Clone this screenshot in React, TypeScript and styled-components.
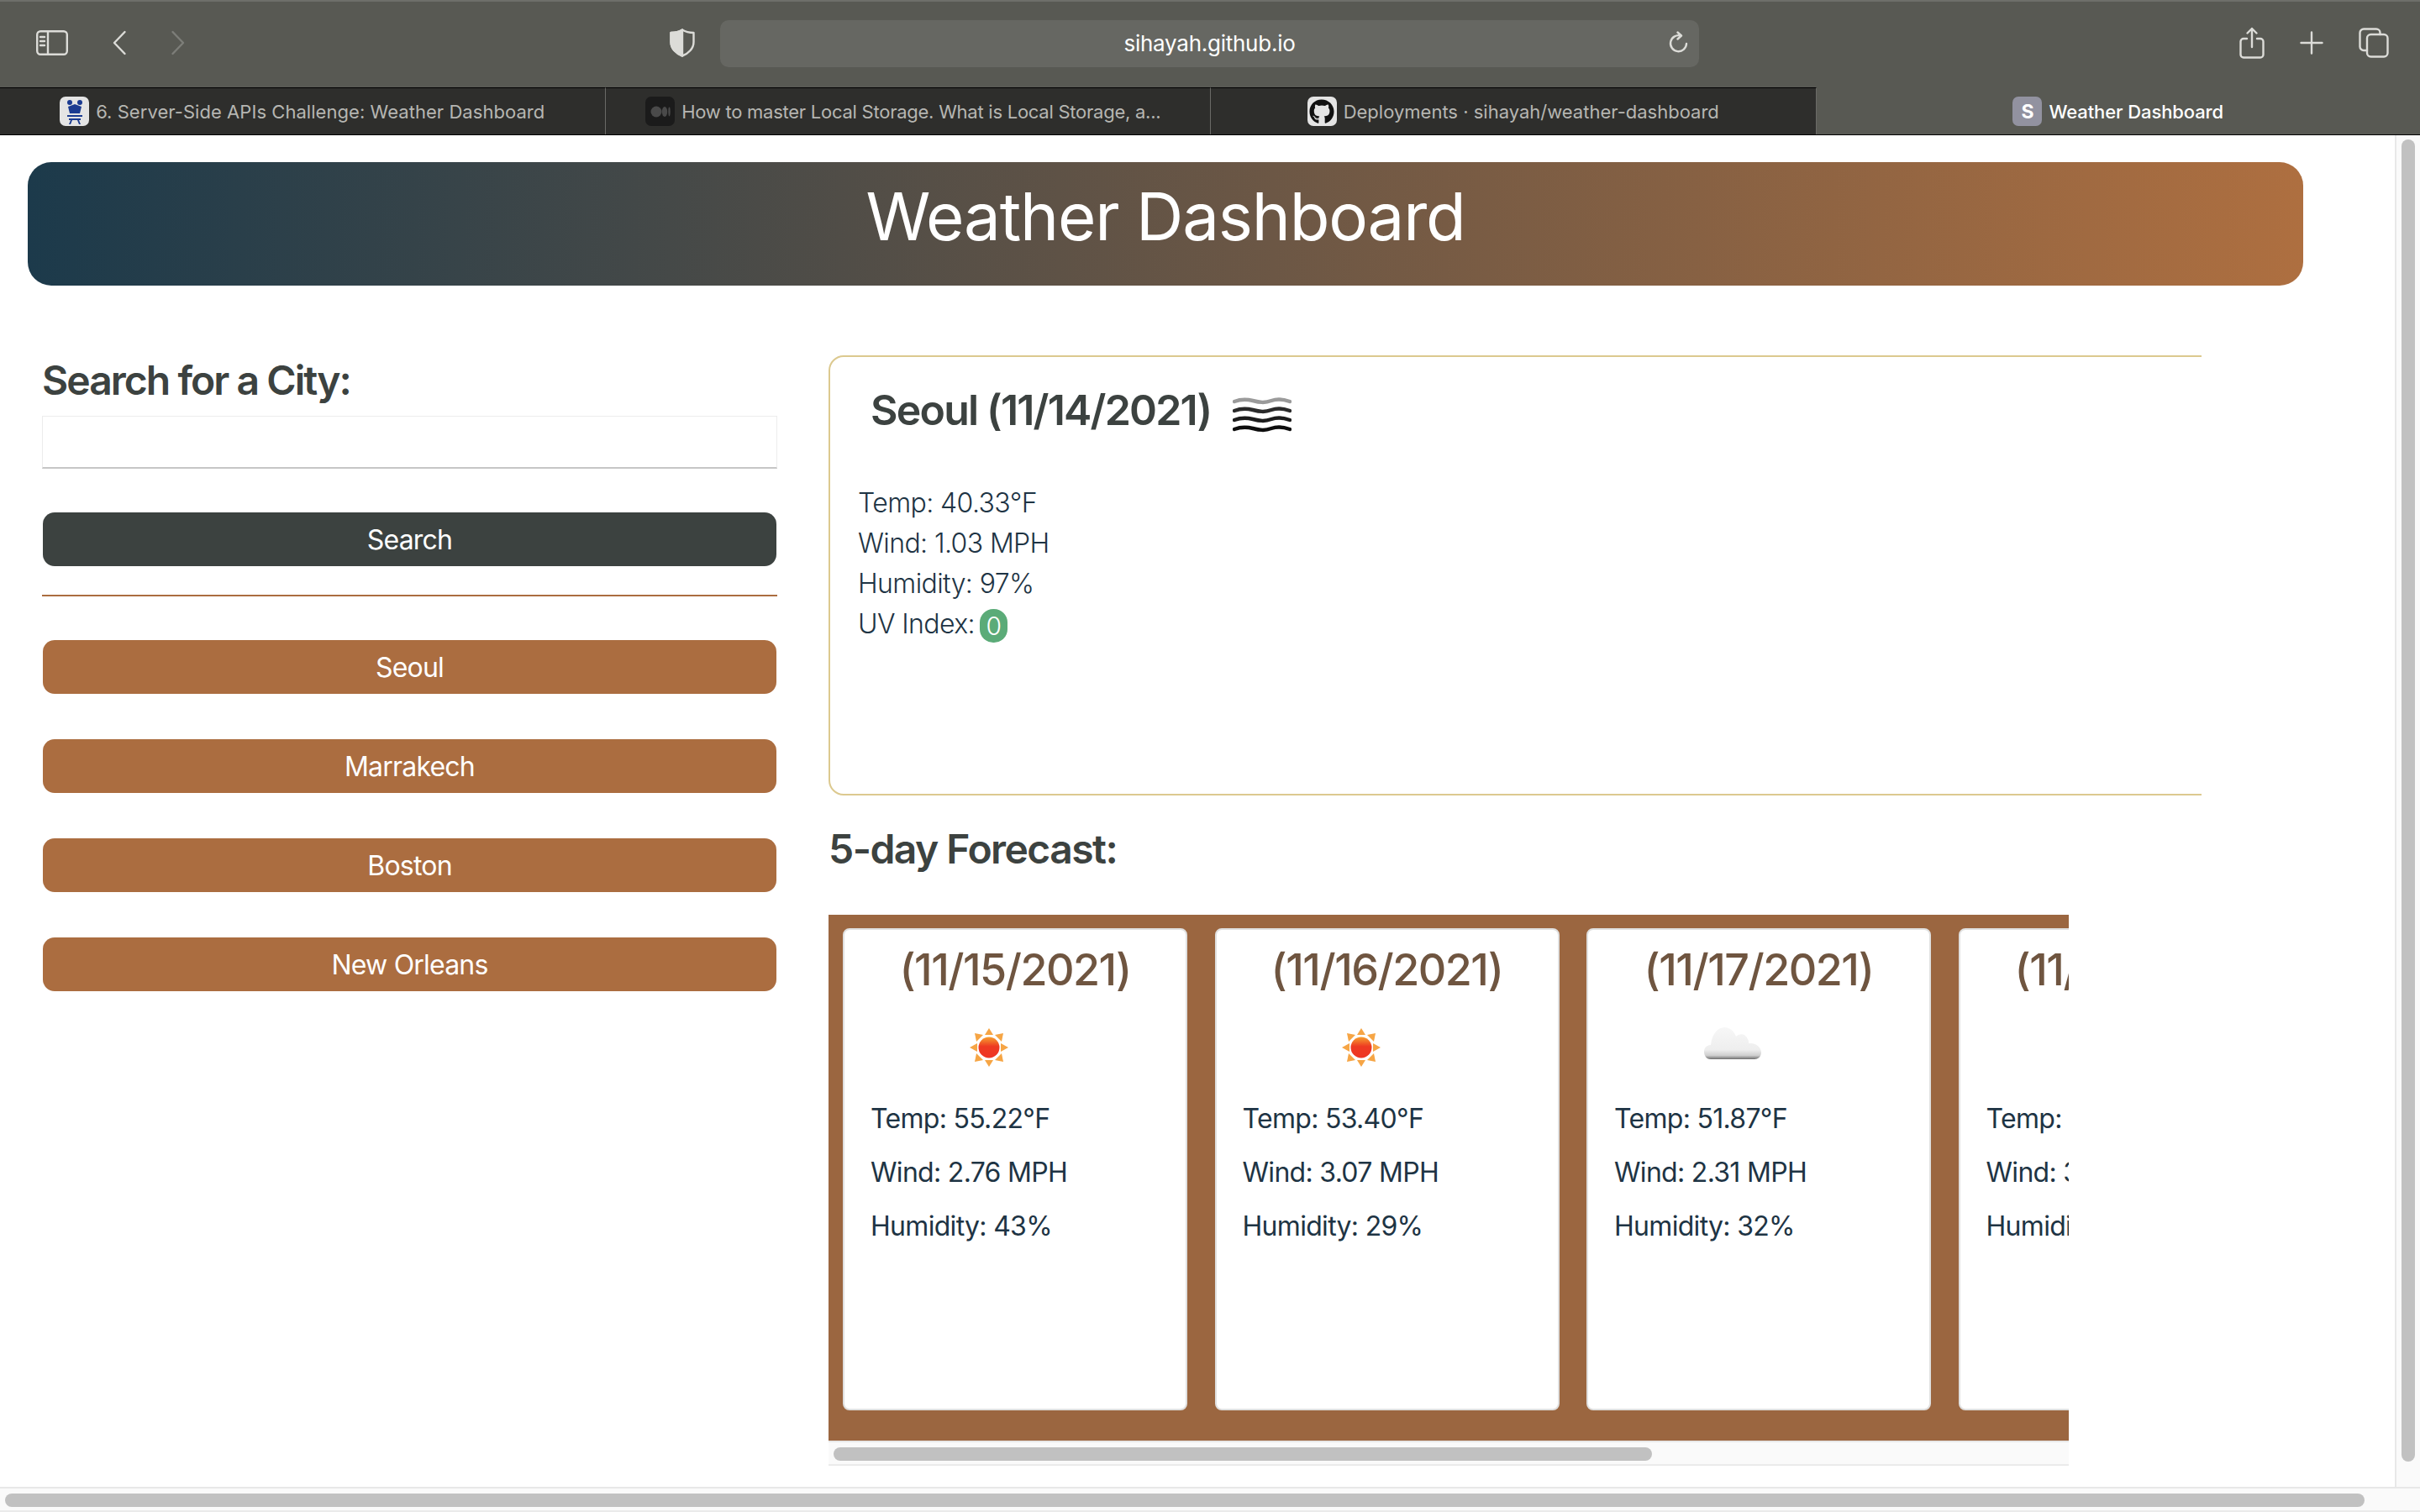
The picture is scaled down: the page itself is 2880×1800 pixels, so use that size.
import type { ReactNode } from "react";
import styled, { createGlobalStyle } from "styled-components";
import { FaGithub } from "react-icons/fa";

const FONT = `Inter, "Liberation Sans", sans-serif`;

const tabs = [
  { title: "6. Server-Side APIs Challenge: Weather Dashboard", icon: "crown", tracking: 0.05, inset: 0 },
  { title: "How to master Local Storage. What is Local Storage, a...", icon: "medium", tracking: -0.25, inset: 11 },
  { title: "Deployments · sihayah/weather-dashboard", icon: "github", tracking: 0, inset: 0 },
  { title: "Weather Dashboard", icon: "site", tracking: -0.1, inset: 0, active: true },
];

const cities = ["Seoul", "Marrakech", "Boston", "New Orleans"];

const forecast = [
  { date: "(11/15/2021)", icon: "sun", temp: "55.22", wind: "2.76", humidity: "43" },
  { date: "(11/16/2021)", icon: "sun", temp: "53.40", wind: "3.07", humidity: "29" },
  { date: "(11/17/2021)", icon: "cloud", temp: "51.87", wind: "2.31", humidity: "32" },
  { date: "(11/18/2021)", icon: "none", temp: "50.12", wind: "3.40", humidity: "35" },
];

const GlobalStyle = createGlobalStyle`
  html, body {
    margin: 0;
    padding: 0;
    overflow: hidden;
    background: #ffffff;
    font-family: ${FONT};
  }
  * {
    box-sizing: border-box;
  }
`;

const Window = styled.div`
  width: 2880px;
  height: 1800px;
  display: flex;
  flex-direction: column;
`;

const Toolbar = styled.div`
  height: 104px;
  flex-shrink: 0;
  position: relative;
  background: #585953;
  border-top: 2px solid #6e6f6a;
`;

const ToolIcon = styled.svg<{ $left: number; $width: number; $height: number; $dim?: boolean }>`
  position: absolute;
  left: ${(p) => p.$left}px;
  top: ${(p) => 49 - p.$height / 2}px;
  width: ${(p) => p.$width}px;
  height: ${(p) => p.$height}px;
  fill: none;
  stroke: ${(p) => (p.$dim ? "#7d7e79" : "#dcdcd8")};
  stroke-width: 2.4;
  stroke-linecap: round;
  stroke-linejoin: round;
`;

const UrlField = styled.div`
  position: absolute;
  left: 857px;
  top: 22px;
  width: 1165px;
  height: 56px;
  padding-bottom: 2px;
  display: flex;
  align-items: center;
  justify-content: center;
  background: #666762;
  border-radius: 10px;
  color: #ffffff;
  font-size: 26px;
  letter-spacing: -0.25px;
`;

const TabBar = styled.div`
  height: 57px;
  flex-shrink: 0;
  display: grid;
  grid-template-columns: repeat(3, 720.5px) 1fr;
  background: #585953;
  border-bottom: 1px solid #000000;
`;

const Tab = styled.div<{ $active?: boolean; $tracking: number; $inset: number }>`
  display: flex;
  align-items: center;
  justify-content: center;
  gap: 8px;
  padding-right: ${(p) => p.$inset}px;
  background: ${(p) => (p.$active ? "#585953" : "#2e2e2c")};
  border-top: 1px solid ${(p) => (p.$active ? "#585953" : "#000000")};
  border-right: ${(p) => (p.$active ? "none" : "1.5px solid #6a6a67")};
  color: ${(p) => (p.$active ? "#ffffff" : "#b6b6b2")};
  font-size: 22px;
  font-weight: ${(p) => (p.$active ? 500 : 400)};
  letter-spacing: ${(p) => p.$tracking}px;
  white-space: nowrap;
`;

const Favicon = styled.div<{ $bg: string }>`
  width: 35px;
  height: 35px;
  flex-shrink: 0;
  display: flex;
  align-items: center;
  justify-content: center;
  border-radius: 7px;
  background: ${(p) => p.$bg};
  color: #ffffff;
  font-size: 23px;
  font-weight: 700;
`;

const Viewport = styled.div`
  flex: 1;
  min-height: 0;
  display: flex;
  flex-direction: column;
  background: #ffffff;
`;

const ViewportRow = styled.div`
  flex: 1;
  min-height: 0;
  display: flex;
`;

const Page = styled.div`
  flex: 1;
  min-width: 0;
  overflow: hidden;
  padding: 32px 0 0 33px;
`;

const VerticalTrack = styled.div`
  width: 30px;
  flex-shrink: 0;
  padding: 5px 0 0 6px;
  background: #fafafa;
  border-left: 2px solid #e8e8e8;
`;

const VerticalThumb = styled.div`
  width: 16px;
  height: 1574px;
  border-radius: 8px;
  background: #c1c1c1;
`;

const HorizontalTrack = styled.div<{ $height: number }>`
  height: ${(p) => p.$height}px;
  flex-shrink: 0;
  padding: 6px 0 0 6px;
  background: #fafafa;
  border-top: 2px solid #e8e8e8;
  border-bottom: 2px solid #ebebeb;
`;

const HorizontalThumb = styled.div<{ $width: number }>`
  width: ${(p) => p.$width}px;
  height: 16px;
  border-radius: 8px;
  background: #c1c1c1;
`;

const Banner = styled.header`
  width: 2708px;
  height: 147px;
  padding-bottom: 18px;
  display: flex;
  align-items: center;
  justify-content: center;
  border-radius: 28px;
  background: linear-gradient(90deg, #1c3a4b 0%, #ae6f40 100%);
  color: #ffffff;
  font-size: 78px;
  font-weight: 400;
  letter-spacing: -1.2px;
`;

const Columns = styled.div`
  display: grid;
  grid-template-columns: 875px 1634px;
  column-gap: 61px;
  padding: 90px 0 0 17px;
`;

const SearchPanel = styled.aside`
  display: flex;
  flex-direction: column;
`;

const SideTitle = styled.h2`
  margin: -5px 0 0;
  height: 56px;
  line-height: 56px;
  color: #3c4240;
  font-size: 48px;
  font-weight: 600;
  letter-spacing: -1.95px;
`;

const CityInput = styled.input`
  display: block;
  width: 100%;
  height: 63px;
  margin-top: 14px;
  background: #ffffff;
  border: 1px solid #ececec;
  border-bottom: 2px solid #c6c6c6;
  outline: none;
`;

const ActionButton = styled.button<{ $bg: string }>`
  display: block;
  width: 873px;
  height: 64px;
  margin-left: 1px;
  border: none;
  border-radius: 14px;
  background: ${(p) => p.$bg};
  color: #ffffff;
  font-family: ${FONT};
  font-size: 32px;
  font-weight: 400;
  letter-spacing: -0.8px;
`;

const SearchRow = styled.div`
  margin-top: 52px;
`;

const Divider = styled.hr`
  width: 100%;
  height: 2px;
  margin: 34px 0 52px;
  border: none;
  background: #ab6d40;
`;

const CityList = styled.div`
  display: flex;
  flex-direction: column;
  gap: 54px;
`;

const MainColumn = styled.main`
  width: 1634px;
  margin-top: -7px;
`;

const CurrentClip = styled.div`
  width: 1634px;
  height: 524px;
  overflow: hidden;
`;

const CurrentCard = styled.section`
  width: 1720px;
  height: 524px;
  padding: 33px 0 0 33px;
  border: 2px solid #dcc98f;
  border-radius: 18px;
`;

const CityHeading = styled.h2`
  display: flex;
  align-items: center;
  gap: 26px;
  height: 60px;
  margin: 0 0 0 15px;
  color: #3c4240;
  font-size: 50px;
  font-weight: 600;
  letter-spacing: -1.8px;
`;

const HeadingIcon = styled.span`
  display: block;
  height: 44px;
  margin-top: 6px;
`;

const CurrentStats = styled.div`
  margin-top: 57px;
  color: #1e3444;
  font-size: 32px;
  font-weight: 300;
  line-height: 48px;
  letter-spacing: -0.6px;
`;

const UvBadge = styled.span`
  display: inline-block;
  width: 33px;
  height: 40px;
  margin-left: 6px;
  border-radius: 16px;
  background: #5bab78;
  color: #ffffff;
  font-size: 30px;
  line-height: 40px;
  text-align: center;
  vertical-align: -2px;
`;

const ForecastTitle = styled.h2`
  margin: 36px 0 0;
  height: 56px;
  line-height: 56px;
  color: #3c4240;
  font-size: 48px;
  font-weight: 600;
  letter-spacing: -1.55px;
`;

const ForecastStrip = styled.div`
  width: 1476px;
  margin-top: 50px;
`;

const ForecastRow = styled.div`
  height: 626px;
  overflow: hidden;
  display: flex;
  gap: 32.5px;
  padding: 16px 0 36px 17px;
  background: #9b6640;
`;

const DayCard = styled.article`
  width: 410px;
  height: 574px;
  flex-shrink: 0;
  padding: 0 0 0 31px;
  background: #ffffff;
  border: 2px solid #e0e0e0;
  border-radius: 8px;
`;

const DayDate = styled.h3`
  height: 90px;
  margin: 0 0 0 -31px;
  color: #6f5540;
  font-size: 52px;
  font-weight: 500;
  line-height: 96px;
  letter-spacing: -1.5px;
  text-align: center;
`;

const DayIcon = styled.div`
  width: 100px;
  height: 100px;
  margin: 0 0 0 91px;
`;

const DayLine = styled.p`
  height: 64px;
  margin: 0;
  color: #1e3444;
  font-size: 32px;
  font-weight: 400;
  line-height: 64px;
  letter-spacing: -0.7px;
`;

const DayStats = styled.div`
  margin-top: 3px;
`;

const CrownIcon = () => (
  <svg width="26" height="30" viewBox="0 0 26 30" fill="#1b3b91">
    <circle cx="7" cy="4" r="3" />
    <circle cx="19" cy="4" r="3" />
    <path d="M5 9 L13 6 L21 9 L19 17 L7 17 Z" />
    <path d="M4 19 H22 V21 H4 Z M6 23 H20 V25 H6 Z" />
    <path d="M8 25 L6 30 H8 L10 25 Z M18 25 L20 30 H18 L16 25 Z" />
  </svg>
);

const MediumIcon = () => (
  <svg width="24" height="14" viewBox="0 0 24 14" fill="#4a4a4a">
    <ellipse cx="7" cy="7" rx="6.5" ry="6.5" />
    <ellipse cx="17" cy="7" rx="3.2" ry="6" />
    <ellipse cx="22.5" cy="7" rx="1.2" ry="5.4" />
  </svg>
);

const WavesIcon = () => (
  <svg width="70" height="44" viewBox="0 0 70 44" fill="none" strokeWidth="4.5" strokeLinecap="round">
    <defs>
      <filter id="waveBlur">
        <feGaussianBlur stdDeviation="0.7" />
      </filter>
    </defs>
    <g filter="url(#waveBlur)">
      <path d="M2 5 C10 2 16 2 24 4 S38 7 46 4 S60 2 68 5" stroke="#9a9a9a" />
      <path d="M2 16 C10 13 16 13 24 15 S38 18 46 15 S60 13 68 16" stroke="#2a2a2a" />
      <path d="M2 27 C10 24 16 24 24 26 S38 29 46 26 S60 24 68 27" stroke="#1c1c1c" />
      <path d="M2 38 C10 35 16 35 24 37 S38 40 46 37 S60 35 68 38" stroke="#111111" />
    </g>
  </svg>
);

const SunIcon = () => (
  <svg width="100" height="100" viewBox="0 0 100 100">
    <defs>
      <linearGradient id="sunCore" x1="0" y1="0" x2="0" y2="1">
        <stop offset="0" stopColor="#f6a12f" />
        <stop offset="0.45" stopColor="#ee3a22" />
        <stop offset="1" stopColor="#ee3524" />
      </linearGradient>
    </defs>
    <g fill="#f6a545">
      <path d="M50 27 L55 35 H45 Z" />
      <path d="M50 73 L55 65 H45 Z" />
      <path d="M27 50 L36 45 V55 Z" />
      <path d="M73 50 L64 45 V55 Z" />
      <path d="M33 33 L43 35 L35 43 Z" />
      <path d="M67 33 L57 35 L65 43 Z" />
      <path d="M33 67 L43 65 L35 57 Z" />
      <path d="M67 67 L57 65 L65 57 Z" />
    </g>
    <circle cx="50" cy="50" r="12.5" fill="url(#sunCore)" />
  </svg>
);

const CloudIcon = () => (
  <svg width="100" height="100" viewBox="0 5 100 100">
    <defs>
      <linearGradient id="cloudBody" x1="0" y1="0" x2="0" y2="1">
        <stop offset="0" stopColor="#f7f7f7" />
        <stop offset="0.7" stopColor="#eeeeee" />
        <stop offset="0.88" stopColor="#cfcfcf" />
        <stop offset="1" stopColor="#6e6e6e" />
      </linearGradient>
    </defs>
    <path
      d="M24 69 C18 69 16 64 16 60 C16 55 20 52 24 52 C25 40 32 31 40 31 C47 31 52 36 54 42 C58 38 65 38 68 45 C69 47 69 48 69 50 C78 49 84 55 84 61 C84 66 80 69 76 69 Z"
      fill="url(#cloudBody)"
    />
  </svg>
);

const weatherIcons: Record<string, ReactNode> = {
  sun: <SunIcon />,
  cloud: <CloudIcon />,
  none: null,
};

const faviconFor = (icon: string) => {
  if (icon === "crown") return <Favicon $bg="#e4e4e4"><CrownIcon /></Favicon>;
  if (icon === "medium") return <Favicon $bg="#1b1b1b"><MediumIcon /></Favicon>;
  if (icon === "github") return <Favicon $bg="#e4e4e4"><FaGithub color="#111111" size={30} /></Favicon>;
  return <Favicon $bg="#9292a0">S</Favicon>;
};

const App = () => {
  return (
    <Window>
      <GlobalStyle />
      <Toolbar>
        <ToolIcon $left={43} $width={38} $height={30} viewBox="0 0 38 30">
          <rect x="1.2" y="1.2" width="35.6" height="27.6" rx="4" />
          <path d="M14 1.2 V28.8 M5 8 H10 M5 13 H10 M5 18 H10" />
        </ToolIcon>
        <ToolIcon $left={133} $width={18} $height={30} viewBox="0 0 18 30">
          <path d="M15.5 2 L3 15 L15.5 28" />
        </ToolIcon>
        <ToolIcon $left={203} $width={18} $height={30} $dim viewBox="0 0 18 30">
          <path d="M2.5 2 L15 15 L2.5 28" />
        </ToolIcon>
        <ToolIcon $left={797} $width={30} $height={34} viewBox="0 0 30 34">
          <path d="M15 1.5 C19 4 24 5 28.5 5 V16 C28.5 24 22 30 15 32.5 C8 30 1.5 24 1.5 16 V5 C6 5 11 4 15 1.5 Z" />
          <path d="M15 1.5 C11 4 6 5 1.5 5 V16 C1.5 24 8 30 15 32.5 Z" fill="#dcdcd8" />
        </ToolIcon>
        <UrlField>sihayah.github.io</UrlField>
        <ToolIcon $left={1986} $width={23} $height={28} viewBox="0 0 23 28">
          <path d="M14 5.5 A9.5 9.5 0 1 0 21 15" />
          <path d="M10.5 1.5 L15 5.5 L10.5 9.5" />
        </ToolIcon>
        <ToolIcon $left={2665} $width={30} $height={38} viewBox="0 0 30 38">
          <path d="M9 14 H5 A3.5 3.5 0 0 0 1.5 17.5 V33 A3.5 3.5 0 0 0 5 36.5 H25 A3.5 3.5 0 0 0 28.5 33 V17.5 A3.5 3.5 0 0 0 25 14 H21" />
          <path d="M15 24 V2 M9.5 7.5 L15 2 L20.5 7.5" />
        </ToolIcon>
        <ToolIcon $left={2737} $width={28} $height={28} viewBox="0 0 28 28">
          <path d="M14 1.5 V26.5 M1.5 14 H26.5" />
        </ToolIcon>
        <ToolIcon $left={2807} $width={36} $height={36} viewBox="0 0 36 36">
          <rect x="10" y="8" width="24.5" height="26.5" rx="4.5" />
          <path d="M10 27 H6 A4.5 4.5 0 0 1 1.5 22.5 V6 A4.5 4.5 0 0 1 6 1.5 H21 A4.5 4.5 0 0 1 25.5 6 V8" />
        </ToolIcon>
      </Toolbar>
      <TabBar>
        {tabs.map((tab) => (
          <Tab key={tab.title} $active={tab.active} $tracking={tab.tracking} $inset={tab.inset}>
            {faviconFor(tab.icon)}
            {tab.title}
          </Tab>
        ))}
      </TabBar>
      <Viewport>
        <ViewportRow>
          <Page>
            <Banner>Weather Dashboard</Banner>
            <Columns>
              <SearchPanel>
                <SideTitle>Search for a City:</SideTitle>
                <CityInput type="text" />
                <SearchRow>
                  <ActionButton $bg="#3c4240">Search</ActionButton>
                </SearchRow>
                <Divider />
                <CityList>
                  {cities.map((city) => (
                    <ActionButton key={city} $bg="#ab6d40">{city}</ActionButton>
                  ))}
                </CityList>
              </SearchPanel>
              <MainColumn>
                <CurrentClip>
                  <CurrentCard>
                    <CityHeading>
                      Seoul (11/14/2021)
                      <HeadingIcon>
                        <WavesIcon />
                      </HeadingIcon>
                    </CityHeading>
                    <CurrentStats>
                      <div>Temp: 40.33°F</div>
                      <div>Wind: 1.03 MPH</div>
                      <div>Humidity: 97%</div>
                      <div>UV Index:<UvBadge>0</UvBadge></div>
                    </CurrentStats>
                  </CurrentCard>
                </CurrentClip>
                <ForecastTitle>5-day Forecast:</ForecastTitle>
                <ForecastStrip>
                  <ForecastRow>
                    {forecast.map((day) => (
                      <DayCard key={day.date}>
                        <DayDate>{day.date}</DayDate>
                        <DayIcon>{weatherIcons[day.icon]}</DayIcon>
                        <DayStats>
                          <DayLine>Temp: {day.temp}°F</DayLine>
                          <DayLine>Wind: {day.wind} MPH</DayLine>
                          <DayLine>Humidity: {day.humidity}%</DayLine>
                        </DayStats>
                      </DayCard>
                    ))}
                  </ForecastRow>
                  <HorizontalTrack $height={30}>
                    <HorizontalThumb $width={974} />
                  </HorizontalTrack>
                </ForecastStrip>
              </MainColumn>
            </Columns>
          </Page>
          <VerticalTrack>
            <VerticalThumb />
          </VerticalTrack>
        </ViewportRow>
        <HorizontalTrack $height={30}>
          <HorizontalThumb $width={2808} />
        </HorizontalTrack>
      </Viewport>
    </Window>
  );
};

export default App;
